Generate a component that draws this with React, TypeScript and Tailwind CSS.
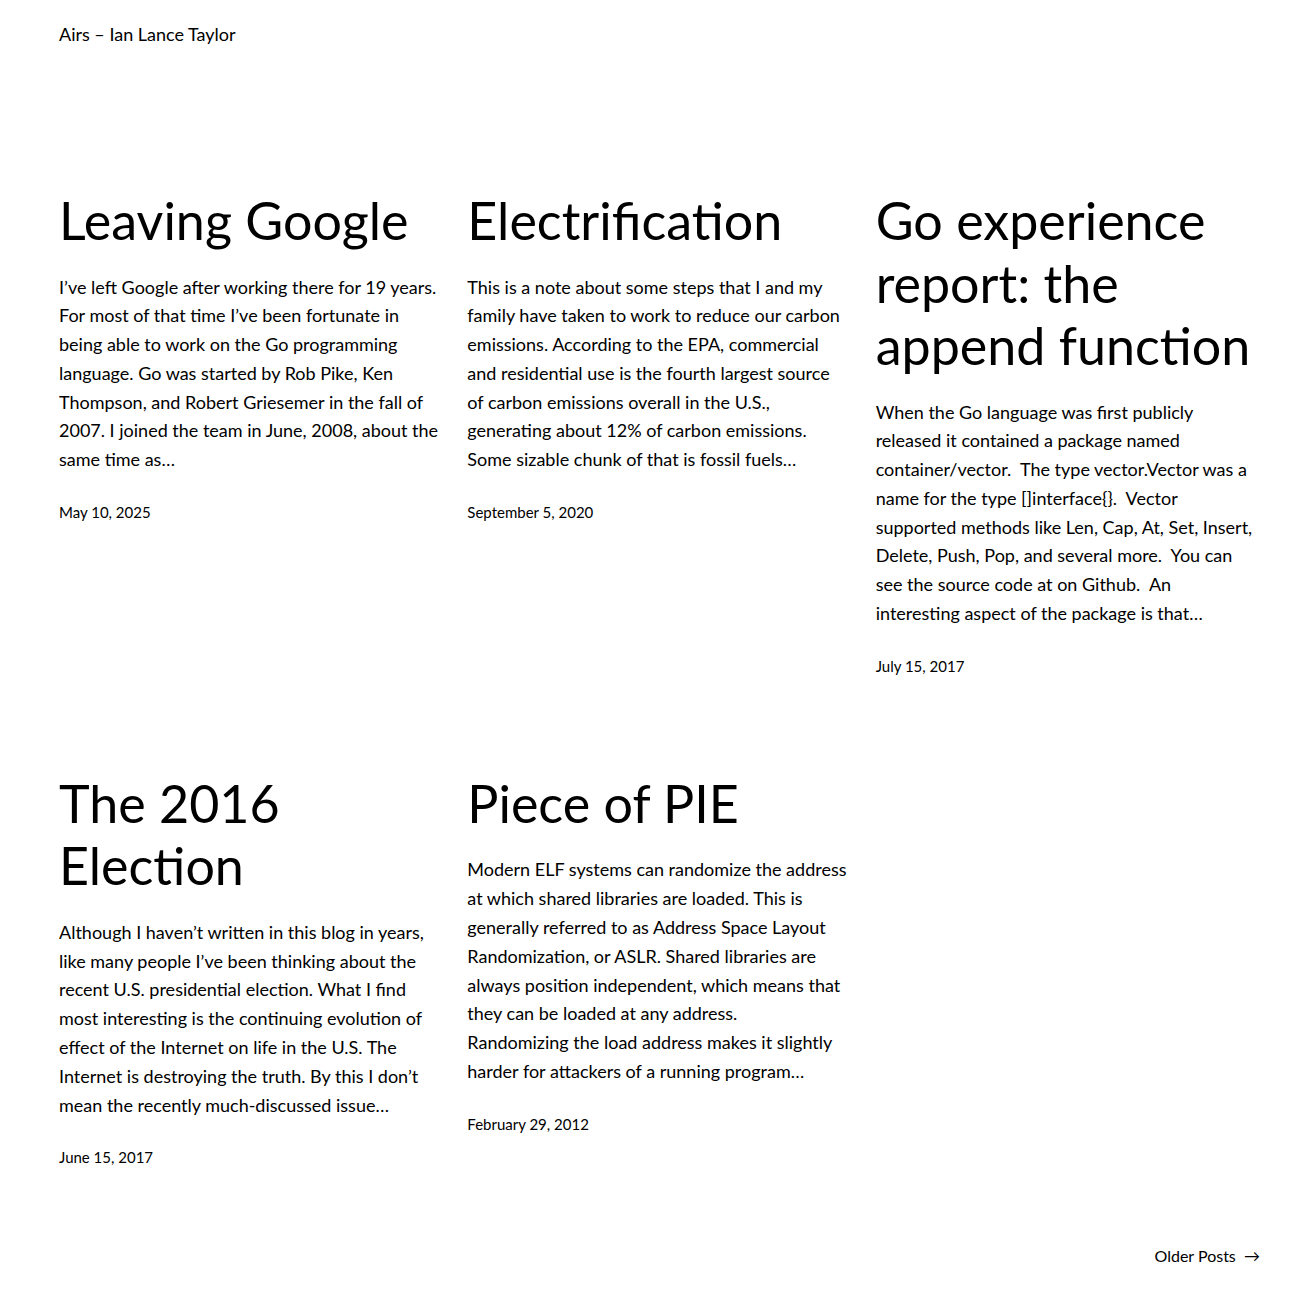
import React from "react";

type Post = { title: string[]; lines: string[]; date: string };

const posts: Post[] = [
  {
    title: ["Leaving Google"],
    lines: [
      "I\u2019ve left Google after working there for 19 years.",
      "For most of that time I\u2019ve been fortunate in",
      "being able to work on the Go programming",
      "language. Go was started by Rob Pike, Ken",
      "Thompson, and Robert Griesemer in the fall of",
      "2007. I joined the team in June, 2008, about the",
      "same time as\u2026",
    ],
    date: "May 10, 2025",
  },
  {
    title: ["Electrification"],
    lines: [
      "This is a note about some steps that I and my",
      "family have taken to work to reduce our carbon",
      "emissions. According to the EPA, commercial",
      "and residential use is the fourth largest source",
      "of carbon emissions overall in the U.S.,",
      "generating about 12% of carbon emissions.",
      "Some sizable chunk of that is fossil fuels\u2026",
    ],
    date: "September 5, 2020",
  },
  {
    title: ["Go experience", "report: the", "append function"],
    lines: [
      "When the Go language was first publicly",
      "released it contained a package named",
      "container/vector.\u00a0 The type vector.Vector was a",
      "name for the type []interface{}.\u00a0 Vector",
      "supported methods like Len, Cap, At, Set, Insert,",
      "Delete, Push, Pop, and several more.\u00a0 You can",
      "see the source code at on Github.\u00a0 An",
      "interesting aspect of the package is that\u2026",
    ],
    date: "July 15, 2017",
  },
  {
    title: ["The 2016", "Election"],
    lines: [
      "Although I haven\u2019t written in this blog in years,",
      "like many people I\u2019ve been thinking about the",
      "recent U.S. presidential election. What I find",
      "most interesting is the continuing evolution of",
      "effect of the Internet on life in the U.S. The",
      "Internet is destroying the truth. By this I don\u2019t",
      "mean the recently much-discussed issue\u2026",
    ],
    date: "June 15, 2017",
  },
  {
    title: ["Piece of PIE"],
    lines: [
      "Modern ELF systems can randomize the address",
      "at which shared libraries are loaded. This is",
      "generally referred to as Address Space Layout",
      "Randomization, or ASLR. Shared libraries are",
      "always position independent, which means that",
      "they can be loaded at any address.",
      "Randomizing the load address makes it slightly",
      "harder for attackers of a running program\u2026",
    ],
    date: "February 29, 2012",
  },
];

function Card({ p }: { p: Post }) {
  return (
    <article className="flex flex-col">
      <h2 className="text-[52px] leading-[62.5px] font-normal text-black whitespace-nowrap">
        {p.title.map((t, i) => (
          <div key={i}>{t}</div>
        ))}
      </h2>
      <div className="mt-[21px] text-[18px] leading-[28.8px] text-black whitespace-nowrap">
        {p.lines.map((l, i) => (
          <div key={i}>{l}</div>
        ))}
      </div>
      <div className="mt-[27px] text-[15px] leading-[22px] text-black">{p.date}</div>
    </article>
  );
}

export default function App() {
  return (
    <div
      className="min-h-[1313px] bg-white text-black"
      style={{ fontFamily: "Lato, 'Noto Sans', sans-serif" }}
    >
      <header className="pl-[59px] pt-[22px] text-[18px] leading-[24px]">Airs – Ian Lance Taylor</header>
      <main className="pl-[59px] pt-[143px] w-[1260px]">
        <div className="grid grid-cols-3 gap-x-[24px] gap-y-[95px]">
          {posts.map((p, i) => (
            <Card key={i} p={p} />
          ))}
        </div>
        <div className="flex justify-end mt-[77px] text-[16px] leading-[22px]">
          <span>Older Posts&nbsp;&nbsp;→</span>
        </div>
      </main>
    </div>
  );
}
